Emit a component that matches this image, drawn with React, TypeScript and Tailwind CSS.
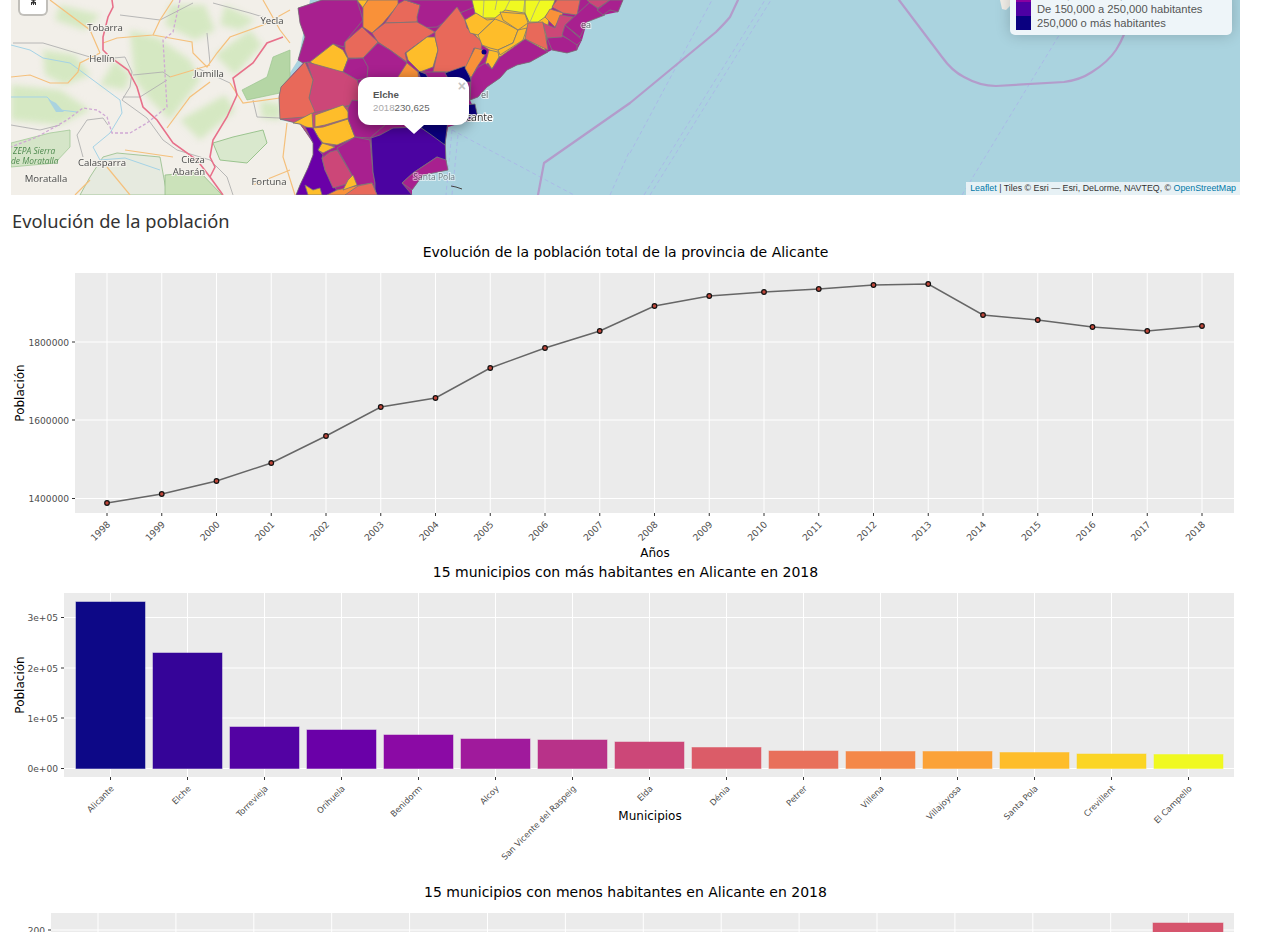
import React from 'react';

// choropleth colours
const PUR = '#a8208f';
const SAL = '#e8695a';
const ORG = '#f99139';
const GLD = '#febd2a';
const YEL = '#f0f921';
const ROS = '#cc4778';
const NAV = '#0a0080';
const DPU = '#4b03a1';
const BPU = '#6a00a8';

const OUTLINE = '298,8 322,0 623,0 618,12 603,15 587,22 582,40 577,50 567,53 552,50 548,52 530,62 517,65 507,70 500,78 487,87 478,97 470,100 478,118 448,127 445,145 446,162 448,170 423,175 412,190 412,195 296,195 300,185 308,168 313,155 313,143 300,124 280,119 279,97 281,87 303,63 298,60 305,37 300,23';

const REGIONS: [string, string][] = [
  [GLD, '465,20 500,5 550,10 545,50 500,57 482,45'],
  [ROS, '280,119 320,110 360,105 350,140 320,150 300,124'],
  [PUR, '298,8 322,0 357,0 363,20 345,42 344,47 333,44 310,62 303,63 298,60 305,37 300,23'],
  [GLD, '357,0 368,0 363,8'],
  [ORG, '363,7 368,0 398,0 398,5 383,23 372,33 363,27'],
  [SAL, '398,4 405,0 420,5 417,22 385,23'],
  [PUR, '405,0 480,0 472,8 455,15 437,27 418,28 417,17 420,5'],
  [SAL, '372,33 385,23 417,22 435,32 427,37 405,53 407,62 390,50 378,42'],
  [SAL, '345,42 362,27 378,42 363,58 348,58 345,50'],
  [GLD, '310,62 333,44 343,50 348,59 343,72 323,70'],
  [PUR, '363,58 378,43 390,50 407,63 402,75 420,90 400,110 350,100 357,80'],
  [PUR, '348,59 363,58 368,67 367,78 357,80 343,72'],
  [GLD, '406,53 427,37 435,37 438,50 433,67 420,72 408,60'],
  [SAL, '435,32 457,7 465,20 467,28 482,42 481,50 474,48 466,68 450,72 433,72 438,50 435,37'],
  [ORG, '407,63 418,72 423,80 400,95 396,80'],
  [PUR, '418,72 445,72 470,80 470,100 420,100'],
  [NAV, '418,71 426,74 430,82 422,82'],
  [NAV, '445,73 465,66 472,82 450,82'],
  [ROS, '307,62 343,72 357,80 365,105 351,105 313,113 309,98 313,80'],
  [SAL, '281,87 305,62 313,80 309,98 315,112 305,117 280,119 279,97'],
  [GLD, '315,115 343,105 352,117 325,125 315,127'],
  [GLD, '313,128 323,127 348,119 355,137 337,145 323,143 318,137'],
  [GLD, '293,123 312,113 313,128 308,128 300,124'],
  [GLD, '322,143 335,147 323,153 318,150'],
  [PUR, '348,108 352,100 400,105 385,125 370,138 355,137 348,119'],
  [BPU, '305,127 313,128 318,137 322,143 318,150 323,155 322,158 325,170 335,188 340,195 296,195 300,185 308,168 313,155 313,143'],
  [PUR, '337,148 355,137 370,140 373,172 375,183 375,195 340,195 353,177'],
  [ROS, '322,158 330,152 337,150 353,177 350,183 333,188 325,170'],
  [DPU, '371,138 380,135 393,128 420,127 430,133 445,137 446,162 437,157 413,173 402,183 412,195 375,195 375,183 373,172'],
  [PUR, '402,183 413,173 437,157 446,160 448,170 423,175 412,190'],
  [NAV, '420,127 423,120 448,120 445,145 430,134'],
  [NAV, '465,105 475,104 478,118 468,118'],
  [ORG, '327,195 337,190 360,185 372,183 377,195'],
  [SAL, '345,195 358,186 372,183 377,195'],
  [GLD, '348,180 353,175 357,185 343,190'],
  [GLD, '305,185 313,190 320,188 322,195 308,195'],
  [YEL, '472,0 555,0 552,8 545,15 529,22 525,13 505,10 495,18 483,18 475,13'],
  [YEL, '525,0 555,0 552,8 545,17 538,22 529,22 525,13'],
  [GLD, '465,20 476,13 487,20 495,19 478,35 470,33'],
  [GLD, '478,35 495,19 503,22 518,30 513,43 498,50 490,48 482,45'],
  [GLD, '500,12 525,14 528,23 518,30 503,20'],
  [GLD, '518,30 527,28 523,40 500,55 498,50 513,43'],
  [GLD, '489,50 498,52 499,57 492,69 488,63 485,65'],
  [ORG, '475,48 483,50 485,55 477,67 471,78 465,68'],
  [SAL, '528,23 543,22 548,50 525,39 527,28'],
  [ORG, '545,17 550,9 563,13 555,27'],
  [SAL, '552,7 557,0 580,0 577,15 563,13'],
  [PUR, '500,57 525,39 548,52 530,62 517,65 507,70 500,78 487,87 478,97 470,100 471,78 477,68 485,63 492,69'],
  [PUR, '547,38 560,35 577,43 577,50 567,53 552,50'],
  [ROS, '543,23 555,28 560,15 573,17 565,27 562,37 547,38'],
  [PUR, '565,25 582,40 577,45 562,35'],
  [PUR, '576,15 590,2 605,15 587,22 580,37 565,25'],
  [ROS, '587,0 610,0 598,8 590,3'],
  [PUR, '597,10 610,0 623,0 618,12 610,10 603,15'],
];

const ROADS_ORANGE = [
  '50,0 90,30 100,53',
  '100,53 80,63 78,72 68,83 50,83 30,75 11,77',
  '103,43 117,38 153,35 160,20 173,0',
  '153,35 192,42 193,53 207,67 217,53 230,37 263,25 290,10',
  '170,77 200,68 210,65',
  '210,82 190,97 167,128',
  '230,83 243,103 280,98',
  '263,0 280,30 290,43',
  '125,150 173,157',
  '107,167 130,195',
  '287,123 283,157 295,195',
  '75,195 90,180',
  '253,185 290,170',
];

const ROADS_GREY = [
  '122,100 130,87 132,72 125,57 113,58',
  '122,100 147,118 163,140 177,150 210,160 227,177 233,195',
  '133,75 163,72 170,77',
  '123,97 140,97 167,80',
  '197,68 217,77 230,83',
  '13,43 43,43 90,57',
  '120,15 160,20 193,3',
  '213,3 250,13 263,17',
  '207,33 210,63',
  '253,100 257,117 280,118',
  '77,135 87,120 103,118 108,125',
  '77,135 83,157',
  '11,125 40,130 60,125',
];

const Basemap = () => (
  <svg viewBox="11 0 1229 195" className="block h-[195px] w-[1229px] blur-[0.6px]">
    <rect x="11" y="0" width="1229" height="195" fill="#aad3df" />
    {/* land */}
    <polygon points="11,0 310,0 298,60 281,87 280,120 300,124 313,143 313,155 308,170 300,185 296,195 11,195" fill="#f2efe9" />
    <polygon points="1000,0 1016,0 1006,10 1002,9" fill="#f2efe9" />
    {/* soft vegetation */}
    <g fill="#d5e8c2" className="blur-[3px]">
      <polygon points="130,30 158,38 190,60 200,80 170,120 150,100 135,80" />
      <polygon points="43,50 75,55 90,75 65,85 45,75" />
      <polygon points="170,5 205,5 215,30 195,40 165,25" />
      <polygon points="215,55 250,30 262,45 235,75" />
      <polygon points="180,120 225,95 235,110 200,140" />
      <polygon points="11,85 60,90 90,110 60,125 11,120" />
      <polygon points="60,5 100,15 85,30 55,20" />
      <polygon points="260,100 282,105 280,120 262,118" />
      <polygon points="225,5 255,20 240,30 220,25" />
      <polygon points="115,60 130,75 125,90 100,85" />
    </g>
    <polygon points="242,90 267,77 273,57 290,50 290,80 280,93 247,100" fill="#b5d6a5" stroke="#9bc48f" strokeWidth="0.7" />
    <polygon points="213,143 233,137 263,130 267,143 247,163 220,160" fill="#d9e8cd" stroke="#9bc48f" />
    <polygon points="11,143 50,133 70,130 70,147 55,163 11,167" fill="#d5e5c8" stroke="#9bc48f" strokeWidth="0.7" />
    <polygon points="103,157 117,153 160,157 167,195 80,195 90,177" fill="#e6eadf" stroke="#93bd88" strokeWidth="0.8" />
    <polygon points="165,175 200,172 222,195 165,195" fill="#cbe2ba" stroke="#93bd88" strokeWidth="0.8" />
    {/* rivers */}
    <g fill="none" stroke="#a5d3e6" strokeWidth="1">
      <polyline points="11,45 30,50 43,58 70,63 97,83 120,100 122,113 110,133 93,147 100,160" />
      <polyline points="11,97 47,97 60,110 77,112" />
      <polyline points="100,160 125,158 160,170" />
    </g>
    <polygon points="48,99 56,103 64,112 56,112" fill="#aad3df" />
    {/* roads */}
    <g fill="none" stroke="#b0b0b0" strokeWidth="0.9">
      {ROADS_GREY.map((p) => <polyline key={p} points={p} />)}
    </g>
    <g fill="none" stroke="#f5c07c" strokeWidth="1.2">
      {ROADS_ORANGE.map((p) => <polyline key={p} points={p} />)}
    </g>
    <polyline points="180,0 173,32 163,40 167,107 147,123 130,133 112,133 107,117 97,110 83,108 67,120 37,137 11,147" fill="none" stroke="#cfa8d4" strokeWidth="1.3" strokeDasharray="3 2" />
    <g fill="none" stroke="#e8708a" strokeWidth="1.6">
      <polyline points="112,0 113,7 108,17 103,37 103,50 110,57 128,70 137,87 143,107 157,120 173,143 197,160 210,177 223,195" />
      <polyline points="283,37 267,43 253,63 233,78 237,95 227,117 213,140 210,157 215,167 210,177" />
    </g>
    {/* map labels */}
    <g fontFamily="'Open Sans', sans-serif" fontSize="9.6" fill="#4a4a4a" stroke="#f4f2ec" strokeWidth="2" paintOrder="stroke" textAnchor="middle">
      <text x="105" y="31">Tobarra</text>
      <text x="102" y="62">Hellín</text>
      <text x="272" y="24">Yecla</text>
      <text x="209" y="77">Jumilla</text>
      <text x="102" y="166">Calasparra</text>
      <text x="193" y="163">Cieza</text>
      <text x="189" y="175">Abarán</text>
      <text x="46" y="182">Moratalla</text>
      <text x="269" y="185">Fortuna</text>
    </g>
    <g fontFamily="'Open Sans', sans-serif" fontSize="8.4" fontStyle="italic" fill="#4f8a4f">
      <text x="13" y="154">ZEPA Sierra</text>
      <text x="11" y="164">de Moratalla</text>
    </g>
    {/* sea lines */}
    <g fill="none" stroke="#aab4e8" strokeWidth="0.8" strokeDasharray="4 3">
      <polyline points="630,153 712,0" />
      <polyline points="644,195 765,0" />
      <polyline points="650,195 771,0" />
      <polyline points="962,195 1058,37 1080,0" />
      <polyline points="452,130 574,195" />
      <polyline points="452,130 446,195" />
      <polyline points="458,135 452,195" />
      <polyline points="610,195 630,150" />
    </g>
    <g fill="none" stroke="#b39ccb" strokeWidth="2.2" strokeLinejoin="round" strokeLinecap="round">
      <path d="M538 195 L544 163 L630 103 L716 32 Q726 22 730 17 L738 0" />
      <path d="M899 0 L942 57 Q952 71 964 77 Q980 86 996 86 L1064 82 Q1080 80 1092 72 Q1108 62 1116 50 Q1126 34 1128 20 L1130 0" />
    </g>
    {/* municipalities */}
    <polygon points={OUTLINE} fill={PUR} />
    <g strokeWidth="0.8" stroke="#777" strokeLinejoin="round">
      {REGIONS.map(([fill, points], i) => <polygon key={i} fill={fill} points={points} />)}
      <circle cx="484" cy="52" r="2.5" fill={NAV} stroke="none" />
    </g>
    <g fill="none" stroke="#999" strokeWidth="0.7">
      <polyline points="484,0 483,18" />
      <polyline points="497,0 495,10" />
      <polyline points="510,0 505,10" />
      <polyline points="525,0 523,13" />
      <polyline points="540,0 536,8 530,22" />
    </g>
    <g fontFamily="'Open Sans', sans-serif" fill="#333" stroke="#fff" strokeWidth="2" paintOrder="stroke">
      <text x="493" y="121" fontSize="10.5" textAnchor="end">Alicante</text>
      <text x="455" y="180" fontSize="8.5" textAnchor="end" opacity="0.55">Santa Pola</text>
      <text x="481" y="98" fontSize="9" opacity="0.7">el</text>
      <text x="581" y="28" fontSize="9" opacity="0.7">ea</text>
    </g>
    <polyline points="451,186 456,187 462,189" fill="none" stroke="#444" strokeWidth="1" />
  </svg>
);

const MapBlock = () => (
  <div className="relative mx-[11px] h-[195px] w-[1229px] overflow-hidden">
    <Basemap />
    {/* zoom control */}
    <div className="absolute left-[9px] top-[-12px] flex h-[26px] w-[26px] items-end justify-center rounded-[4px] bg-white pb-[8px] shadow-[0_0_0_2px_rgba(0,0,0,0.2)]">
      <svg width="7" height="7" viewBox="0 0 7 7">
        <path d="M1 0h5v1.5H4.5V3H6v3H5V4.5H4V6H3V4.5H2V6H1V3h1.5V1.5H1z" fill="#333" />
      </svg>
    </div>
    {/* popup */}
    <div className="absolute left-[347px] top-[77px] h-[48px] w-[111px] rounded-[12px] bg-white pl-[15px] pt-[11px] font-['Liberation_Sans',sans-serif] text-[9.7px] leading-[13px] text-[#333] shadow-[0_3px_14px_rgba(0,0,0,0.4)]">
      <div className="font-bold text-[#555]">Elche</div>
      <div>
        <span className="text-[#aaa]">2018</span>
        <span className="text-[#666]">230,625</span>
      </div>
      <span className="absolute right-[3px] top-[2px] text-[14px] font-bold leading-[14px] text-[#c3c3c3]">×</span>
      <div className="absolute left-[46px] top-[48px] h-0 w-0 border-x-[10px] border-t-[9px] border-x-transparent border-t-white" />
    </div>
    {/* legend */}
    <div className="absolute bottom-[160px] right-[8px] w-[222px] rounded-[5px] bg-[#eef5f9] px-[6px] pb-[5px] font-['Liberation_Sans',sans-serif] text-[11.2px] leading-[14px] text-[#555] shadow-[0_0_15px_rgba(0,0,0,0.2)]">
      {[
        ['#8a00a0', 'De 75,000 a 150,000 habitantes'],
        ['#4d00a3', 'De 150,000 a 250,000 habitantes'],
        ['#0a0080', '250,000 o más habitantes'],
      ].map(([color, label]) => (
        <div key={label} className="flex h-[14px]">
          <i className="mr-[6px] block h-[14px] w-[15px]" style={{ background: color }} />
          <span className="whitespace-nowrap">{label}</span>
        </div>
      ))}
    </div>
    {/* attribution */}
    <div className="absolute bottom-0 right-0 h-[13px] whitespace-nowrap bg-[#e7f1f5] px-[4px] font-['Liberation_Sans',sans-serif] text-[8.85px] leading-[13px] text-[#333]">
      <span className="text-[#0078a8]">Leaflet</span> | Tiles © Esri — Esri, DeLorme, NAVTEQ, © <span className="text-[#0078a8]">OpenStreetMap</span>
    </div>
  </div>
);

const TICK = '#4d4d4d';

type PlotProps = {
  top: number;
  title: string;
  left: number;
  panelTop: number;
  panelBottom: number;
  yTicks: [number, string][];
  xGrid: number[];
  xLabels?: string[];
  xLabelSize?: number;
  xTitle?: string;
  xTitleY?: number;
  yTitle?: string;
  yTitleY?: number;
  children?: React.ReactNode;
};

// one ggplot-style panel, coordinates are page pixels
const Plot = ({ top, title, left, panelTop, panelBottom, yTicks, xGrid, xLabels, xLabelSize, xTitle, xTitleY, yTitle, yTitleY, children }: PlotProps) => (
  <svg viewBox={`11 ${top} 1229 320`} className="ml-[11px] block h-[320px] w-[1229px] font-['DejaVu_Sans',sans-serif]">
    <text x="625.5" y={top + 17} textAnchor="middle" fontSize="14" fill="#000">{title}</text>
    <rect x={left} y={panelTop} width={1234 - left} height={panelBottom - panelTop} fill="#ebebeb" />
    {xGrid.map((x) => <line key={x} x1={x} x2={x} y1={panelTop} y2={panelBottom} stroke="#fff" strokeWidth="1" />)}
    {yTicks.map(([y]) => <line key={y} x1={left} x2={1234} y1={y} y2={y} stroke="#fff" strokeWidth="1" />)}
    {children}
    {yTicks.map(([y, label]) => (
      <g key={label}>
        <line x1={left - 3} x2={left} y1={y} y2={y} stroke="#333" strokeWidth="1" />
        <text x={left - 6} y={y + 3.5} textAnchor="end" fontSize="9.1" fill={TICK}>{label}</text>
      </g>
    ))}
    {xGrid.map((x) => <line key={x} x1={x} x2={x} y1={panelBottom} y2={panelBottom + 3} stroke="#333" strokeWidth="1" />)}
    {xLabels?.map((label, i) => (
      <text key={label} x={xGrid[i] + 4} y={panelBottom + 12} textAnchor="end" fontSize={xLabelSize} fill={TICK} transform={`rotate(-45 ${xGrid[i] + 4} ${panelBottom + 12})`}>{label}</text>
    ))}
    {xTitle && <text x={xTitle === 'Años' ? 655 : 650} y={xTitleY} textAnchor="middle" fontSize="12" fill="#000">{xTitle}</text>}
    {yTitle && <text x={24} y={yTitleY} textAnchor="middle" fontSize="12" fill="#000" transform={`rotate(-90 24 ${yTitleY})`}>{yTitle}</text>}
  </svg>
);

const YEARS = Array.from({ length: 21 }, (_, i) => String(1998 + i));
const YEAR_X = YEARS.map((_, i) => 107 + i * 54.75);
const POP_Y = [503, 494, 481, 463, 436, 407, 398, 368, 348, 331, 306, 296, 292, 289, 285, 284, 315, 320, 327, 331, 326];

const TOP_NAMES = ['Alicante', 'Elche', 'Torrevieja', 'Orihuela', 'Benidorm', 'Alcoy', 'San Vicente del Raspeig', 'Elda', 'Dénia', 'Petrer', 'Villena', 'Villajoyosa', 'Santa Pola', 'Crevillent', 'El Campello'];
const TOP_X = TOP_NAMES.map((_, i) => 110.5 + i * 77);
const TOP_Y = [602, 653, 727, 730, 735, 739, 740, 742, 747.5, 751, 751.5, 751.5, 752.5, 754, 754.5];
const PLASMA = ['#0d0887', '#350498', '#5302a3', '#6a00a8', '#8b0aa5', '#a01a9c', '#b83289', '#cc4778', '#db5c68', '#e8705b', '#f48849', '#fba238', '#febd2a', '#fbd524', '#f0f921'];

const LOW_X = Array.from({ length: 15 }, (_, i) => 98 + i * 77.9);

export default function App() {
  return (
    <div className="relative h-[932px] w-full overflow-hidden bg-white">
      <MapBlock />
      <h2 className="h-[45px] pl-[12px] pt-[13px] font-['Noto_Sans',sans-serif] text-[18.3px] leading-[26px] text-[#333]">Evolución de la población</h2>

      <Plot
        top={240}
        title="Evolución de la población total de la provincia de Alicante"
        left={75}
        panelTop={273}
        panelBottom={513}
        yTicks={[[498.5, '1400000'], [420, '1600000'], [342, '1800000']]}
        xGrid={YEAR_X}
        xLabels={YEARS}
        xLabelSize={9.2}
        xTitle="Años"
        xTitleY={557}
        yTitle="Población"
        yTitleY={393}
      >
        <polyline points={YEAR_X.map((x, i) => `${x},${POP_Y[i]}`).join(' ')} fill="none" stroke="#666" strokeWidth="1.5" />
        {YEAR_X.map((x, i) => <circle key={x} cx={x} cy={POP_Y[i]} r="2.3" fill="#c0473a" stroke="#111" strokeWidth="1.2" />)}
      </Plot>

      <Plot
        top={560}
        title="15 municipios con más habitantes en Alicante en 2018"
        left={64}
        panelTop={593}
        panelBottom={777}
        yTicks={[[617.5, '3e+05'], [668, '2e+05'], [718, '1e+05'], [768.5, '0e+00']]}
        xGrid={TOP_X}
        xLabels={TOP_NAMES}
        xLabelSize={8.4}
        xTitle="Municipios"
        xTitleY={820}
        yTitle="Población"
        yTitleY={685}
      >
        {TOP_X.map((x, i) => (
          <rect key={x} x={x - 34.5} y={TOP_Y[i]} width="69" height={768.5 - TOP_Y[i]} fill={PLASMA[i]} stroke={PLASMA[i]} strokeOpacity="0.5" strokeWidth="1" />
        ))}
      </Plot>

      <Plot
        top={880}
        title="15 municipios con menos habitantes en Alicante en 2018"
        left={51}
        panelTop={913}
        panelBottom={1097}
        yTicks={[[930, '200']]}
        xGrid={LOW_X}
      >
        <rect x="1153" y="923" width="70" height="170" fill="#d6556d" stroke="#d6556d" strokeOpacity="0.5" />
      </Plot>
    </div>
  );
}
